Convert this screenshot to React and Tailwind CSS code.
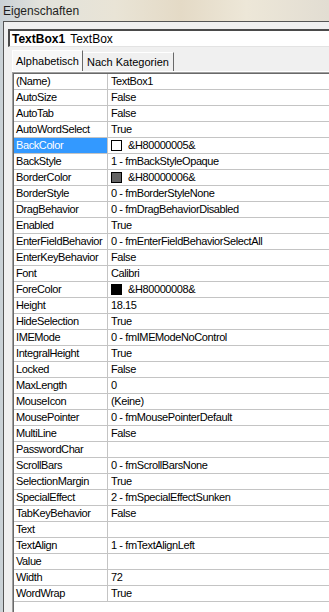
import React from "react";

const rows = [
  ["(Name)", "TextBox1"],
  ["AutoSize", "False"],
  ["AutoTab", "False"],
  ["AutoWordSelect", "True"],
  ["BackColor", "&H80000005&", "#ffffff"],
  ["BackStyle", "1 - fmBackStyleOpaque"],
  ["BorderColor", "&H80000006&", "#646464"],
  ["BorderStyle", "0 - fmBorderStyleNone"],
  ["DragBehavior", "0 - fmDragBehaviorDisabled"],
  ["Enabled", "True"],
  ["EnterFieldBehavior", "0 - fmEnterFieldBehaviorSelectAll"],
  ["EnterKeyBehavior", "False"],
  ["Font", "Calibri"],
  ["ForeColor", "&H80000008&", "#000000"],
  ["Height", "18.15"],
  ["HideSelection", "True"],
  ["IMEMode", "0 - fmIMEModeNoControl"],
  ["IntegralHeight", "True"],
  ["Locked", "False"],
  ["MaxLength", "0"],
  ["MouseIcon", "(Keine)"],
  ["MousePointer", "0 - fmMousePointerDefault"],
  ["MultiLine", "False"],
  ["PasswordChar", ""],
  ["ScrollBars", "0 - fmScrollBarsNone"],
  ["SelectionMargin", "True"],
  ["SpecialEffect", "2 - fmSpecialEffectSunken"],
  ["TabKeyBehavior", "False"],
  ["Text", ""],
  ["TextAlign", "1 - fmTextAlignLeft"],
  ["Value", ""],
  ["Width", "72"],
  ["WordWrap", "True"],
];

function Row({ name, value, swatch }) {
  const selected = name === "BackColor";
  return (
    <div className="flex h-[16px] border-b border-[#c4c4c4] leading-[15px]">
      <div
        className={
          "w-[94px] shrink-0 border-r border-[#c4c4c4] pl-[2px] overflow-hidden whitespace-nowrap " +
          (selected ? "bg-[#3399ff] text-white" : "text-black")
        }
      >
        {name}
      </div>
      <div className="flex items-center pl-[3px] whitespace-nowrap text-black">
        {swatch && (
          <span
            className="mr-[6px] inline-block h-[11px] w-[11px] border border-black"
            style={{ backgroundColor: swatch }}
          />
        )}
        <span>{value}</span>
      </div>
    </div>
  );
}

export default function App() {
  return (
    <div
      className="flex h-[612px] w-[329px] flex-col overflow-hidden bg-[linear-gradient(90deg,#c9d1d6_0%,#e2e2dc_12%,#e9e4d6_35%,#e4dac6_55%,#ede7d8_75%,#e2ddd2_100%)]"
      style={{ fontFamily: '"Liberation Sans", Arial, sans-serif' }}
    >
      {/* titelleiste */}
      <div className="flex h-[21px] shrink-0 items-center pl-[3px] text-[12px] text-[#1e1e1e]">
        Eigenschaften
      </div>

      {/* panel */}
      <div className="ml-[3px] flex flex-1 flex-col border-l border-t border-[#555555] bg-[#f0f0f0]">
        {/* objekt-auswahl */}
        <div className="ml-[4px] mt-[7px] flex h-[18px] items-center border-l-2 border-t-2 border-[#4a4a4a] border-b border-b-[#e3e3e3] bg-white pl-[2px] text-[12px] text-black">
          <span className="font-bold">TextBox1</span>
          <span className="ml-[5px]">TextBox</span>
        </div>

        {/* tabs */}
        <div className="ml-[8px] mt-[3px] flex h-[22px] items-end border-b border-white text-[11px] text-black">
          <div className="flex h-[21px] items-center border-l border-t border-white border-r border-r-[#696969] bg-[#f7f7f7] px-[3px]">
            Alphabetisch
          </div>
          <div className="flex h-[19px] items-center border-t border-white border-r border-r-[#696969] px-[4px]">
            Nach Kategorien
          </div>
        </div>

        {/* eigenschaften-liste */}
        <div className="ml-[8px] flex flex-1 flex-col border-l border-t border-[#a0a0a0]">
          <div className="flex-1 border-l border-t border-[#696969] bg-white text-[11px] tracking-[-0.4px]">
            {rows.map(([n, v, s]) => (
              <Row key={n} name={n} value={v} swatch={s} />
            ))}
          </div>
        </div>
      </div>
    </div>
  );
}
